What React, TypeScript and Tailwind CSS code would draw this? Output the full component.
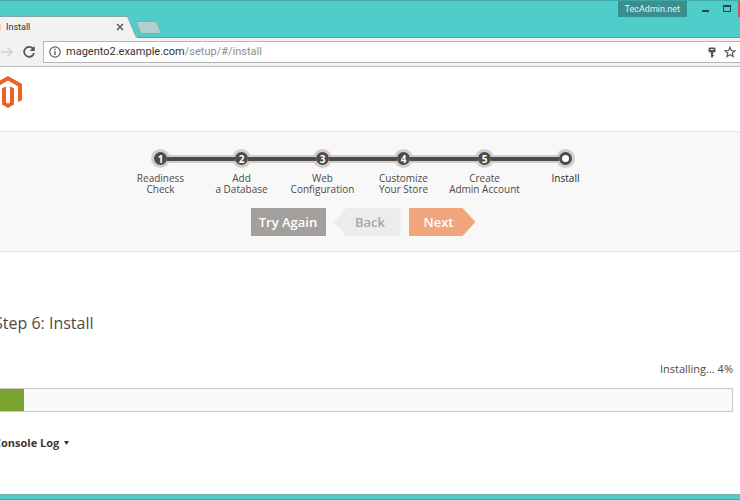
import { clsx } from "clsx";

type Step = { label: [string, string?] };

const steps: Step[] = [
  { label: ["Readiness", "Check"] },
  { label: ["Add", "a Database"] },
  { label: ["Web", "Configuration"] },
  { label: ["Customize", "Your Store"] },
  { label: ["Create", "Admin Account"] },
  { label: ["Install"] },
];

const currentStep = 5;
const progress = 4;

function TitleBar() {
  return (
    <div className="relative flex h-[38px] items-end border-t border-b border-t-[#3fa5a5] border-b-[#5a9d9c] bg-[#4ecdcb]">
      {/* Active tab, its lower edge covers the bar's border */}
      <div className="relative -mb-px h-[22px] w-[138px]">
        <svg className="absolute inset-0" width="138" height="22" viewBox="0 0 138 22" aria-hidden="true">
          <path d="M0 0.5H126Q127.500 0.500 128.200 2L135.500 19.500Q136.300 21.500 138 21.500V22H0Z" fill="#f2f2f2" />
          <path d="M0 0.500H126Q127.500 0.500 128.200 2L135.500 19.500Q136.300 21.500 138 21.500" fill="none" stroke="#7fa9a8" />
          <path d="M0 8V15" stroke="#f8cdb9" strokeWidth="2" />
        </svg>
        <div className="relative flex h-full items-center justify-between pr-[14px] pl-[6px]">
          <span className="font-[Roboto,sans-serif] text-[9px] leading-4 text-[#333]">Install</span>
          <button type="button" aria-label="Close tab">
            <svg width="8" height="8" viewBox="0 0 8 8" stroke="#555" strokeWidth="1.4" aria-hidden="true">
              <path d="M1 1L7 7M7 1L1 7" />
            </svg>
          </button>
        </div>
      </div>
      <button type="button" aria-label="New tab" className="-ml-1 mb-[2px]">
        <svg width="30" height="15" viewBox="0 0 30 15" aria-hidden="true">
          <path d="M2.500 1.500H21Q22.500 1.500 23 2.800L27.500 13.500H8Q6.500 13.500 6 12.200Z" fill="#b3d0cf" stroke="#7daeac" />
        </svg>
      </button>
      <div className="ml-auto flex h-full items-start">
        <span className="mr-[15px] h-4 bg-[#388f8e] px-[7px] font-[Roboto,sans-serif] text-[9px] leading-4 text-[#e8f3f3]">
          TecAdmin.net
        </span>
        <button type="button" aria-label="Minimize" className="mt-[9px] mr-[14px]">
          <span className="block h-[2px] w-[7px] bg-[#2a4545]" />
        </button>
        <button type="button" aria-label="Maximize" className="mt-1 mr-[7px]">
          <span className="block h-[7px] w-2 border border-t-2 border-[#2a4545]" />
        </button>
        <button type="button" aria-label="Close" className="h-4 w-[2px] bg-[#d9534f]" />
      </div>
    </div>
  );
}

function AddressBar() {
  return (
    <div className="flex h-[29px] items-center border-b border-[#bdbdbd] bg-[#f2f2f2]">
      <button type="button" aria-label="Forward" className="ml-px">
        <svg width="12" height="12" viewBox="0 0 12 12" fill="none" stroke="#cfcfcf" strokeWidth="1.5" aria-hidden="true">
          <path d="M0 6H11M6.500 1.500L11 6L6.500 10.500" />
        </svg>
      </button>
      <button type="button" aria-label="Reload" className="ml-[9px]">
        <svg width="14" height="14" viewBox="0 0 14 14" fill="none" aria-hidden="true">
          <path d="M11 3.600A5 5 0 1 0 12 8" stroke="#555" strokeWidth="1.800" />
          <path d="M12.700 1V6H7.700Z" fill="#555" />
        </svg>
      </button>
      <div className="ml-[7px] flex h-[22px] flex-1 items-center rounded-l-[2px] border border-r-0 border-[#b5b5b5] bg-white pl-[5px]">
        <svg width="12" height="12" viewBox="0 0 12 12" fill="none" aria-hidden="true">
          <circle cx="6" cy="6" r="5.200" stroke="#5f5f5f" strokeWidth="1.200" />
          <path d="M6 5.200V9M6 2.800V4.200" stroke="#5f5f5f" strokeWidth="1.400" />
        </svg>
        <label htmlFor="address" className="ml-[5px] font-[Roboto,sans-serif] text-[11px] leading-4 text-[#333]">
          magento2.example.com
        </label>
        <input
          id="address"
          type="text"
          defaultValue="/setup/#/install"
          className="min-w-0 flex-1 bg-transparent font-[Roboto,sans-serif] text-[11px] leading-4 text-[#8c8c8c] outline-none"
        />
        <button type="button" aria-label="Saved password" className="mr-2">
          <svg width="8" height="11" viewBox="0 0 8 11" aria-hidden="true">
            <path d="M1.500 0.500H6.500L7.500 1.500V4.500L6.500 5.500H5V10.500H3V5.500H1.500L0.500 4.500V1.500Z" fill="#555" />
            <path d="M2.500 2.500H5.500" stroke="#fff" />
            <path d="M5 8.500H6" stroke="#555" />
          </svg>
        </button>
        <button type="button" aria-label="Bookmark" className="mr-1">
          <svg width="12" height="12" viewBox="0 0 12 12" fill="none" stroke="#555" strokeWidth="1.200" aria-hidden="true">
            <path d="M6 1.200L7.300 4.500L11 4.700L8.200 7L9.100 10.600L6 8.600L2.900 10.600L3.800 7L1 4.700L4.700 4.500Z" />
          </svg>
        </button>
      </div>
    </div>
  );
}

function StepItem({ step, index }: { step: Step; index: number }) {
  const isCurrent = index === currentStep;
  // The line runs over the light ring up to the dark dot
  const line = "relative z-10 mt-[6px] h-2 flex-1 border-y-2";

  return (
    <li className="w-[81px]" aria-current={isCurrent ? "step" : undefined}>
      <div className="flex items-start">
        <span className={clsx(line, "-mr-[3px]", index === 0 ? "border-transparent" : "border-[#cfcecd] bg-[#514943]")} />
        <span className="flex size-[19px] items-center justify-center rounded-full border-[3px] border-[#d0cfce] bg-[#514943] text-[10px] leading-none font-bold text-white">
          {isCurrent ? <span className="size-[7px] rounded-full bg-white" /> : index + 1}
        </span>
        <span className={clsx(line, "-ml-[3px]", isCurrent ? "border-transparent" : "border-[#cfcecd] bg-[#514943]")} />
      </div>
      <p
        className={clsx(
          "mt-[5px] text-center text-[10px] leading-[11px] whitespace-pre-line",
          isCurrent ? "font-medium text-[#2b2522]" : "text-[#514943]"
        )}
      >
        {step.label.join("\n")}
      </p>
    </li>
  );
}

function Wizard() {
  const button = "h-7 text-[13px] leading-7 font-semibold";

  return (
    <nav className="flex h-[121px] flex-col items-center border-y border-[#e3e3e3] bg-[#f8f8f8] pt-[17px] pr-[14px]">
      <ol className="flex h-[59px]">
        {steps.map((step, i) => (
          <StepItem key={step.label[0]} step={step} index={i} />
        ))}
      </ol>
      <div className="flex gap-2">
        <button type="button" className={clsx(button, "w-[75px] bg-[#a29f9c] text-white")}>
          Try Again
        </button>
        <button
          type="button"
          disabled
          className={clsx(button, "w-[67px] bg-[#ececec] pl-[6px] text-[#a9a6a4] [clip-path:polygon(13px_0,100%_0,100%_100%,13px_100%,0_50%)]")}
        >
          Back
        </button>
        <button
          type="button"
          className={clsx(button, "w-[67px] bg-[#f1a57c] pr-[7px] text-white [clip-path:polygon(0_0,calc(100%-13px)_0,100%_50%,calc(100%-13px)_100%,0_100%)]")}
        >
          Next
        </button>
      </div>
    </nav>
  );
}

export default function App() {
  return (
    <div className="flex min-h-screen flex-col overflow-hidden bg-white font-['Open_Sans',sans-serif]">
      <TitleBar />
      <AddressBar />

      <header className="flex h-16 items-start pt-[9px]">
        <svg className="-ml-[6px]" width="28" height="32" viewBox="0 0 28 32" fill="#eb6228" aria-label="Magento" role="img">
          <path d="M14 0L28 8V24L24 26.300V10.300L14 4.500L4 10.300V26.300L0 24V8Z" />
          <path d="M8 12.500L12 10.300V26.500L14 27.700L16 26.500V10.300L20 12.500V28.500L14 32L8 28.500Z" />
        </svg>
      </header>

      <Wizard />

      <main className="-ml-[6px] flex-1 pt-[59px] pr-[7px] text-[#41362f]">
        <h1 className="text-[16px] leading-6 text-[#514943]">Step 6: Install</h1>
        <div className="mt-6 text-right text-[11px] leading-5 text-[#514943]">Installing... {progress}%</div>
        <div
          role="progressbar"
          aria-label="Installation progress"
          aria-valuenow={progress}
          className="mt-[9px] h-6 border border-[#ccc] bg-[#fafafa]"
        >
          <div className="h-full bg-[#79a22e]" style={{ width: `${progress}%` }} />
        </div>
        <button type="button" className="mt-[21px] flex items-center gap-[5px] text-[11px] leading-5 font-bold">
          Console Log
          <svg width="5" height="4" viewBox="0 0 5 4" fill="currentColor" aria-hidden="true">
            <path d="M0 0H5L2.500 4Z" />
          </svg>
        </button>
      </main>

      <div className="h-[6px] border-t border-b border-t-[#74b5b4] border-b-[#3fa5a5] bg-[#4ecdcb]" />
    </div>
  );
}
